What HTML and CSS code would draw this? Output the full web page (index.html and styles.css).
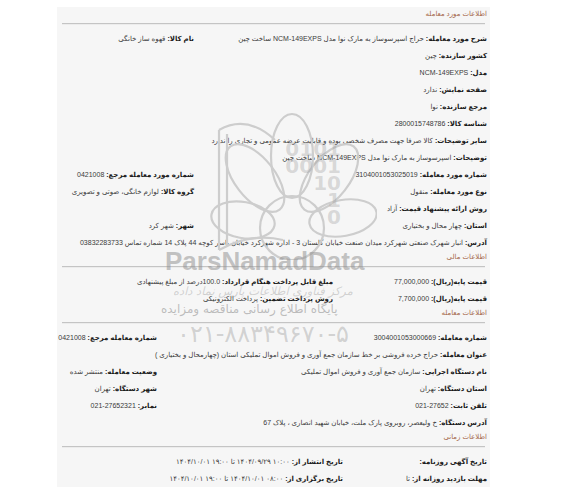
FILE: index.html
```html
<!DOCTYPE html>
<html lang="fa">
<head>
<meta charset="utf-8">
<link rel="stylesheet" href="styles.css">
</head>
<body>
<div class="panel">
  <section class="sec">
    <div class="sec-title">اطلاعات مورد معامله</div>
    <div class="grid g1">
      <div class="cell"><b>شرح مورد معامله:</b> حراج اسپرسوساز به مارک نوا مدل NCM-149EXPS ساخت چین</div>
      <div class="cell"><b>نام کالا:</b> قهوه ساز خانگی</div>
      <div class="cell full"><b>کشور سازنده:</b> چین</div>
      <div class="cell full"><b>مدل:</b> NCM-149EXPS</div>
      <div class="cell full"><b>صفحه نمایش:</b> ندارد</div>
      <div class="cell full"><b>مرجع سازنده:</b> نوا</div>
      <div class="cell full"><b>شناسه کالا:</b> 2800015748786</div>
      <div class="cell full"><b>سایر توضیحات:</b> کالا صرفا جهت مصرف شخصی بوده و قابلیت عرضه عمومی و تجاری را ندارد</div>
      <div class="cell full"><b>توضیحات:</b> اسپرسوساز به مارک نوا مدل NCM-149EXPS ساخت چین</div>
      <div class="cell"><b>شماره مورد معامله:</b> 3104001053025019</div>
      <div class="cell"><b>شماره مورد معامله مرجع:</b> 0421008</div>
      <div class="cell"><b>نوع مورد معامله:</b> منقول</div>
      <div class="cell"><b>گروه کالا:</b> لوازم خانگی، صوتی و تصویری</div>
      <div class="cell full"><b>روش ارائه پیشنهاد قیمت:</b> آزاد</div>
      <div class="cell"><b>استان:</b> چهار محال و بختیاری</div>
      <div class="cell"><b>شهر:</b> شهر کرد</div>
      <div class="cell full"><b>آدرس:</b> انبار شهرک صنعتی شهرکرد میدان صنعت خیابان گلستان 3 - اداره شهرکرد خیابان یاسر کوچه 44 پلاک 14 شماره تماس 03832283733</div>
    </div>
  </section>

  <section class="sec">
    <div class="sec-title">اطلاعات مالی</div>
    <div class="grid g2">
      <div class="cell"><b>قیمت پایه(ریال):</b> 77,000,000</div>
      <div class="cell"><b>مبلغ قابل پرداخت هنگام قرارداد:</b> 100.0درصد از مبلغ پیشنهادی</div>
      <div class="cell"><b>قیمت پایه(ریال):</b> 7,700,000</div>
      <div class="cell"><b>روش پرداخت تضمین:</b> پرداخت الکترونیکی</div>
    </div>
  </section>

  <section class="sec">
    <div class="sec-title">اطلاعات معامله</div>
    <div class="grid g3">
      <div class="cell"><b>شماره معامله:</b> 3004001053000669</div>
      <div class="cell"><b>شماره معامله مرجع:</b> 0421008</div>
      <div class="cell full"><b>عنوان معامله:</b> حراج خرده فروشی بر خط سازمان جمع آوری و فروش اموال تملیکی استان (چهارمحال و بختیاری )</div>
      <div class="cell"><b>نام دستگاه اجرایی:</b> سازمان جمع آوری و فروش اموال تملیکی</div>
      <div class="cell"><b>وضعیت معامله:</b> منتشر شده</div>
      <div class="cell"><b>استان دستگاه:</b> تهران</div>
      <div class="cell"><b>شهر دستگاه:</b> تهران</div>
      <div class="cell"><b>تلفن ثابت:</b> 27652-021</div>
      <div class="cell"><b>نمابر:</b> 27652321-021</div>
      <div class="cell full"><b>آدرس دستگاه:</b> خ ولیعصر، روبروی پارک ملت، خیابان شهید انصاری ، پلاک 67</div>
    </div>
  </section>

  <section class="sec">
    <div class="sec-title">اطلاعات زمانی</div>
    <div class="grid g4">
      <div class="cell"><b>تاریخ آگهی روزنامه:</b></div>
      <div class="cell"><b>تاریخ انتشار از:</b> ۱۰:۰۰ ۱۴۰۴/۰۹/۲۹ تا ۱۹:۰۰ ۱۴۰۴/۱۰/۰۱</div>
      <div class="cell"><b>مهلت بازدید روزانه از:</b> تا</div>
      <div class="cell"><b>تاریخ برگزاری از:</b> ۰۸:۰۰ ۱۴۰۴/۱۰/۰۱ تا ۱۹:۰۰ ۱۴۰۴/۱۰/۰۱</div>
    </div>
  </section>

  <div class="watermark" aria-hidden="true">
    <svg class="wm-logo" width="180" height="160" viewBox="0 0 180 160">
      <g fill="none" stroke="#cdcdcd" stroke-width="2.2">
        <path d="M22 30 L22 150 M30 34 L30 146 M22 30 Q50 14 78 40 M22 150 Q55 132 86 140"/>
        <ellipse cx="58" cy="78" rx="20" ry="40" transform="rotate(-38 58 78)"/>
        <ellipse cx="95" cy="56" rx="21" ry="42"/>
        <ellipse cx="132" cy="78" rx="20" ry="40" transform="rotate(38 132 78)"/>
        <ellipse cx="146" cy="118" rx="18" ry="34" transform="rotate(80 146 118)"/>
        <ellipse cx="46" cy="120" rx="18" ry="32" transform="rotate(-80 46 120)"/>
        <circle cx="95" cy="128" r="32"/>
      </g>
    </svg>
    <div class="wm-bits">
      <span>0101</span><span>0001</span><span>10</span><span>1</span><span>0</span>
    </div>
    <div class="wm-brand">ParsNamadData</div>
    <div class="wm-fa1">مرکز فناوری اطلاعات پارس نماد داده</div>
    <div class="wm-fa2">پایگاه اطلاع رسانی مناقصه ومزایده</div>
    <div class="wm-phone">۰۲۱-۸۸۳۴۹۶۷۰-۵</div>
  </div>
</div>
</body>
</html>
```

FILE: styles.css
```css
html, body {
  margin: 0;
  padding: 0;
  background: #ffffff;
}
body {
  font-family: "Liberation Sans", "DejaVu Sans", sans-serif;
  font-size: 7px;
  color: #3a3a3a;
}
.panel {
  position: relative;
  width: 427px;
  margin: 7px 0 0 57px;
  padding: 1px 3px 3px 3px;
  background: #f6f6f6;
  direction: rtl;
}
.sec-title {
  height: 12px;
  line-height: 12px;
  color: #a4674a;
}
.sec-title::after {
  content: "";
  display: block;
  margin: 3px 2px 0 2px;
  border-top: 1px solid #c4c4c4;
  border-bottom: 1px solid #ececec;
}
.grid {
  display: grid;
  margin-top: 10px;
}
.g1 { grid-template-columns: 293px minmax(0, 1fr); }
.g2 { grid-template-columns: 154px minmax(0, 1fr); }
.g3 { grid-template-columns: 330px minmax(0, 1fr); }
.g4 { grid-template-columns: 144px minmax(0, 1fr); }
.cell {
  height: 17px;
  line-height: 17px;
  white-space: nowrap;
}
.cell b {
  color: #1a1a1a;
  font-weight: bold;
}
.full { grid-column: 1 / -1; }

.watermark {
  position: absolute;
  left: 0;
  top: 0;
  width: 100%;
  height: 100%;
  pointer-events: none;
  font-family: "DejaVu Sans", sans-serif;
}
.wm-logo {
  position: absolute;
  left: 140px;
  top: 93px;
}
.wm-bits {
  position: absolute;
  left: 222px;
  top: 134px;
  display: flex;
  flex-direction: column;
  align-items: flex-end;
  width: 62px;
  direction: ltr;
  font-weight: bold;
  font-size: 20px;
  line-height: 17px;
  color: rgba(150,150,150,0.33);
}
.wm-brand {
  position: absolute;
  left: 108px;
  top: 239px;
  direction: ltr;
  font-family: "Liberation Sans", sans-serif;
  font-weight: bold;
  font-size: 26px;
  color: rgba(140,140,140,0.5);
}
.wm-fa1 {
  position: absolute;
  left: 116px;
  top: 277px;
  font-size: 11.5px;
  font-style: italic;
  color: rgba(150,150,150,0.4);
}
.wm-fa2 {
  position: absolute;
  left: 104px;
  top: 295px;
  font-size: 12px;
  color: rgba(140,140,140,0.55);
}
.wm-phone {
  position: absolute;
  left: 120px;
  top: 313px;
  direction: ltr;
  font-size: 24px;
  color: rgba(150,150,150,0.4);
}
```
